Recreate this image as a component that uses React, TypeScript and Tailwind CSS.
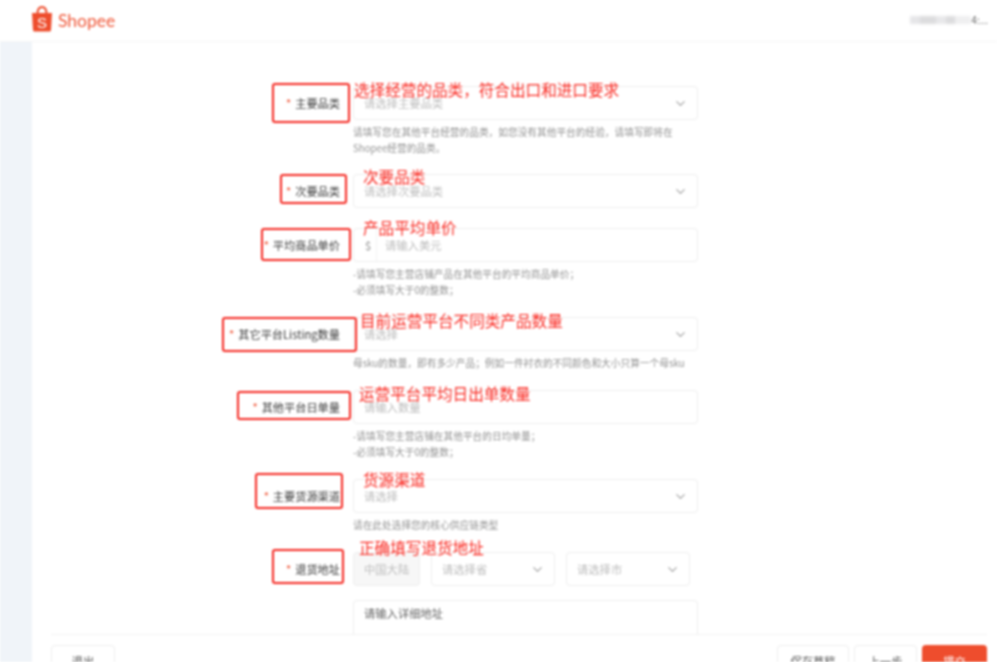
import React from "react";
import { ChevronDown } from "lucide-react";

const FONT = "font-['Noto_Sans_CJK_SC','Liberation_Sans',sans-serif]";

function Logo() {
  return (
    <svg width="22" height="26" viewBox="0 0 22 26" className="shrink-0">
      <path d="M6.5 8 C6.5 3 8.5 1 11 1 C13.5 1 15.5 3 15.5 8" fill="none" stroke="#ee4d2d" strokeWidth="2" />
      <path d="M1 7 H21 L20 24 Q19.9 25.5 18.4 25.5 H3.6 Q2.1 25.5 2 24 Z" fill="#ee4d2d" />
      <text x="11" y="21.5" textAnchor="middle" fontSize="15" fill="#ffffff" fontFamily="Liberation Sans, sans-serif">S</text>
    </svg>
  );
}

function Select({ text, className = "w-full" }: { text: string; className?: string }) {
  return (
    <div className={`flex h-[34px] items-center justify-between rounded-[4px] border border-[#eeeeee] bg-white pl-[10px] pr-[9px] ${className}`}>
      <span className="text-[11.3px] text-[#bdbdbd]">{text}</span>
      <ChevronDown size={15} strokeWidth={1.7} className="text-[#a0a0a0]" />
    </div>
  );
}

function TextInput({ text }: { text: string }) {
  return (
    <div className="flex h-[34px] w-full items-center rounded-[4px] border border-[#eeeeee] bg-white pl-[10px]">
      <span className="text-[11.3px] text-[#bdbdbd]">{text}</span>
    </div>
  );
}

function Row({
  label,
  note,
  rowClass,
  boxClass,
  noteClass,
  hints = [],
  children,
}: {
  label: string;
  note: string;
  rowClass: string;
  boxClass: string;
  noteClass: string;
  hints?: string[];
  children: React.ReactNode;
}) {
  return (
    <div className={`relative flex items-start ${rowClass}`}>
      <div className="flex h-[34px] w-[308px] shrink-0 items-center justify-end text-[11.2px] text-[#3a3a3a]">
        <span className="mr-[4px] text-[#ee4d2d]">*</span>
        {label}
      </div>
      <div className="ml-[13px] w-[345px] shrink-0">
        {children}
        {hints.length > 0 && (
          <div className="mt-[4px] text-[9.7px] leading-[16px] text-[#939393]">
            {hints.map((h) => (
              <div key={h}>{h}</div>
            ))}
          </div>
        )}
      </div>
      <div className={`absolute rounded-[3px] border-2 border-[#f5251e] ${boxClass}`} />
      <div className={`absolute whitespace-nowrap text-[15.6px] leading-[20px] text-[#fa2a22] ${noteClass}`}>{note}</div>
    </div>
  );
}

export default function App() {
  return (
    <div className={`flex h-screen w-full flex-col overflow-hidden bg-white blur-[0.8px] ${FONT}`}>
      <header className="flex h-[42px] shrink-0 items-start justify-between border-b border-[#f5f5f5] pl-[31px] pr-[9px]">
        <div className="mt-[5px] flex items-center">
          <Logo />
          <span className="ml-[5px] mt-[4px] font-['Lato',sans-serif] text-[17.5px] leading-[24px] text-[#f0593a]">Shopee</span>
        </div>
        <div className="mt-[13px] flex items-center">
          <div className="flex h-[8px] w-[61px] overflow-hidden rounded-[1px] blur-[1px]">
            <div className="w-[10px] bg-[#e6e6e8]" />
            <div className="w-[16px] bg-[#dcdcde]" />
            <div className="w-[10px] bg-[#e8e8ea]" />
            <div className="w-[9px] bg-[#dcdcde]" />
            <div className="w-[16px] bg-[#efeff0]" />
          </div>
          <span className="text-[10px] leading-[14px] text-[#666666]">4:...</span>
        </div>
      </header>

      <div className="flex min-h-0 flex-1">
        <aside className="w-[32px] shrink-0 bg-[#f0f4f9]" />
        <main className="flex min-w-0 flex-1 flex-col">
          <div className="min-h-0 flex-1 overflow-hidden pt-[44px]">
            <Row
              label="主要品类"
              note="选择经营的品类，符合出口和进口要求"
              rowClass="mb-[18px]"
              boxClass="left-[240px] top-[-3px] h-[40px] w-[78px]"
              noteClass="left-[322px] top-[-7px]"
              hints={["请填写您在其他平台经营的品类，如您没有其他平台的经验，请填写即将在", "Shopee经营的品类。"]}
            >
              <Select text="请选择主要品类" />
            </Row>
            <Row
              label="次要品类"
              note="次要品类"
              rowClass="mb-[20px]"
              boxClass="left-[248px] top-0 h-[30px] w-[67px]"
              noteClass="left-[331px] top-[-8px]"
            >
              <Select text="请选择次要品类" />
            </Row>
            <Row
              label="平均商品单价"
              note="产品平均单价"
              rowClass="mb-[19px]"
              boxClass="left-[229px] top-0 h-[33px] w-[90px]"
              noteClass="left-[331px] top-[-11px]"
              hints={["-请填写您主营店铺产品在其他平台的平均商品单价；", "-必须填写大于0的整数；"]}
            >
              <div className="flex h-[34px] w-full items-center rounded-[4px] border border-[#eeeeee] bg-white">
                <span className="w-[22px] pl-[11px] text-[11px] text-[#8a8a8a]">$</span>
                <span className="h-full border-l border-[#f2f2f2] pl-[8px] text-[11.3px] leading-[32px] text-[#bdbdbd]">请输入美元</span>
              </div>
            </Row>
            <Row
              label="其它平台Listing数量"
              note="目前运营平台不同类产品数量"
              rowClass="mb-[19px]"
              boxClass="left-[190px] top-0 h-[35px] w-[135px]"
              noteClass="left-[328px] top-[-7px]"
              hints={["母sku的数量，即有多少产品；例如一件衬衣的不同颜色和大小只算一个母sku"]}
            >
              <Select text="请选择" />
            </Row>
            <Row
              label="其他平台日单量"
              note="运营平台平均日出单数量"
              rowClass="mb-[19px]"
              boxClass="left-[205px] top-[1px] h-[29px] w-[114px]"
              noteClass="left-[327px] top-[-7px]"
              hints={["-请填写您主营店铺在其他平台的日均单量；", "-必须填写大于0的整数；"]}
            >
              <TextInput text="请输入数量" />
            </Row>
            <Row
              label="主要货源渠道"
              note="货源渠道"
              rowClass="mb-[19px]"
              boxClass="left-[223px] top-[-6px] h-[36px] w-[88px]"
              noteClass="left-[331px] top-[-10px]"
              hints={["请在此处选择您的核心供应链类型"]}
            >
              <Select text="请选择" />
            </Row>
            <Row
              label="退货地址"
              note="正确填写退货地址"
              rowClass=""
              boxClass="left-[240px] top-[-3px] h-[35px] w-[72px]"
              noteClass="left-[327px] top-[-15px]"
            >
              <div className="flex gap-[11px]">
                <div className="flex h-[34px] w-[67px] shrink-0 items-center rounded-[4px] border border-[#eeeeee] bg-[#f7f7f7] pl-[10px] text-[11.3px] text-[#bdbdbd]">
                  中国大陆
                </div>
                <Select text="请选择省" className="w-[124px] shrink-0" />
                <Select text="请选择市" className="w-[124px] shrink-0" />
              </div>
              <div className="mt-[14px] h-[60px] rounded-[4px] border border-[#eeeeee] pl-[10px] pt-[4px] text-[11.3px] text-[#666666]">
                请输入详细地址
              </div>
            </Row>
          </div>

          <footer className="ml-[19px] mr-[10px] flex h-[28px] shrink-0 items-start justify-between overflow-hidden border-t border-[#f2f2f2] bg-white pt-[10px]">
            <button className="h-[32px] w-[64px] shrink-0 rounded-[4px] border border-[#eeeeee] bg-white text-[11.3px] text-[#555555]">退出</button>
            <div className="flex gap-[5px]">
              <button className="h-[32px] w-[72px] rounded-[4px] border border-[#eeeeee] bg-white text-[11.3px] text-[#555555]">保存草稿</button>
              <button className="h-[32px] w-[63px] rounded-[4px] border border-[#eeeeee] bg-white text-[11.3px] text-[#555555]">上一步</button>
              <button className="h-[32px] w-[65px] rounded-[4px] bg-[#ee4d2d] text-[11.3px] text-white">提交</button>
            </div>
          </footer>
        </main>
      </div>
    </div>
  );
}
